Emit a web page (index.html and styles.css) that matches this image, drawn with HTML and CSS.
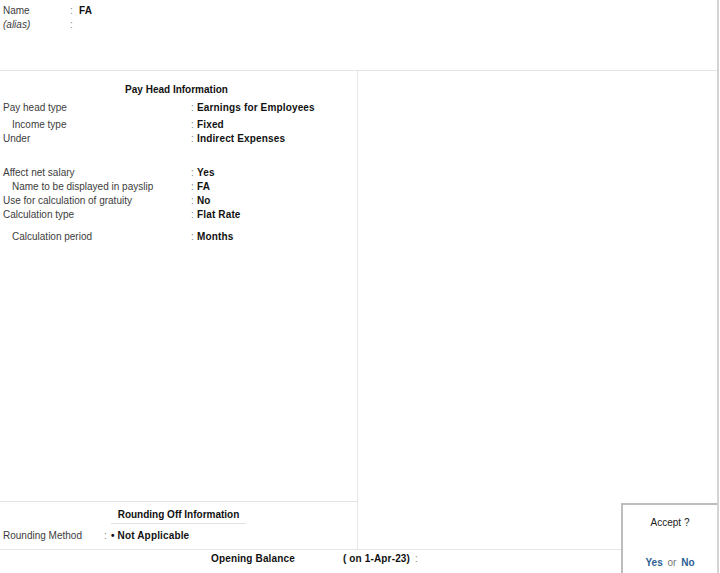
FILE: index.html
```html
<!DOCTYPE html>
<html lang="en">

<head>
    <meta charset="UTF-8">
    <meta name="viewport" content="width=device-width, initial-scale=1.0">
    <title>Pay Head Alteration</title>
    <link rel="stylesheet" href="styles.css">
</head>

<body>
    <div class="page">
        <div class="top">
            <div class="name-row">
                <span class="name-label">Name</span>
                <span class="colon">:</span>
                <span class="value">FA</span>
            </div>
            <div class="name-row">
                <span class="name-label alias">(alias)</span>
                <span class="colon">:</span>
                <span class="value"></span>
            </div>
        </div>

        <div class="main">
            <div class="left">
                <div class="section-title">Pay Head Information</div>

                <div class="row first">
                    <span class="label">Pay head type</span>
                    <span class="colon">:</span>
                    <span class="value">Earnings for Employees</span>
                </div>
                <div class="row gap-small">
                    <span class="label sub">Income type</span>
                    <span class="colon">:</span>
                    <span class="value">Fixed</span>
                </div>
                <div class="row">
                    <span class="label">Under</span>
                    <span class="colon">:</span>
                    <span class="value">Indirect Expenses</span>
                </div>

                <div class="row gap-large">
                    <span class="label">Affect net salary</span>
                    <span class="colon">:</span>
                    <span class="value">Yes</span>
                </div>
                <div class="row">
                    <span class="label sub">Name to be displayed in payslip</span>
                    <span class="colon">:</span>
                    <span class="value">FA</span>
                </div>
                <div class="row">
                    <span class="label">Use for calculation of gratuity</span>
                    <span class="colon">:</span>
                    <span class="value">No</span>
                </div>
                <div class="row">
                    <span class="label">Calculation type</span>
                    <span class="colon">:</span>
                    <span class="value">Flat Rate</span>
                </div>
                <div class="row gap-medium">
                    <span class="label sub">Calculation period</span>
                    <span class="colon">:</span>
                    <span class="value">Months</span>
                </div>

                <div class="rounding">
                    <div class="rounding-title"><span>Rounding Off Information</span></div>
                    <div class="rounding-row">
                        <span class="label">Rounding Method</span>
                        <span class="colon">:</span>
                        <span class="value">&bull; Not Applicable</span>
                    </div>
                </div>
            </div>
            <div class="right"></div>
        </div>

        <div class="footer">
            <span class="value opening">Opening Balance</span>
            <span class="value opening-date">( on 1-Apr-23)</span>
            <span class="colon">:</span>
        </div>

        <!-- confirmation box sits over the bottom right corner -->
        <div class="accept">
            <div class="accept-title">Accept ?</div>
            <div class="accept-options">
                <span class="opt">Yes</span> <span class="or">or</span> <span class="opt">No</span>
            </div>
        </div>
    </div>
</body>

</html>
```

FILE: styles.css
```css
body {
    margin: 0;
    padding: 0;
    background-color: #ffffff;
    font-family: "Liberation Sans", Arial, sans-serif;
    font-size: 10px;
    color: #3c3c3c;
}

.page {
    position: relative;
    width: 717px;
    height: 573px;
    border-right: 2px solid #d4d4d4;
    overflow: hidden;
}

.colon {
    color: #888;
}

.value {
    font-weight: bold;
    color: #111;
    letter-spacing: 0.15px;
}

/* top: name + alias */
.top {
    height: 66px;
    padding-top: 4px;
    border-bottom: 1px solid #e4e4e4;
}

.name-row {
    display: grid;
    grid-template-columns: 67px 9px 1fr;
    line-height: 14px;
    padding-left: 3px;
}

.alias {
    font-style: italic;
}

/* main area */
.main {
    display: flex;
    height: 478px;
}

.left {
    width: 358px;
    display: flex;
    flex-direction: column;
    border-right: 1px solid #e6e6e6;
    padding-top: 12px;
    box-sizing: border-box;
}

.right {
    flex: 1;
}

.section-title {
    text-align: center;
    font-weight: bold;
    color: #111;
    line-height: 14px;
    margin-left: -4px;
}

.row {
    display: grid;
    grid-template-columns: 188px 6px 1fr;
    line-height: 14px;
    padding-left: 3px;
}

.row.first {
    margin-top: 4px;
}

.row.gap-small {
    margin-top: 3px;
}

.row.gap-large {
    margin-top: 20px;
}

.row.gap-medium {
    margin-top: 8px;
}

.label.sub {
    padding-left: 9px;
}

/* rounding off block at the bottom of the left column */
.rounding {
    margin-top: auto;
    border-top: 1px solid #e4e4e4;
    padding-top: 6px;
    height: 48px;
    box-sizing: border-box;
}

.rounding-title {
    text-align: center;
    line-height: 14px;
}

.rounding-title span {
    display: inline-block;
    font-weight: bold;
    color: #111;
    padding: 0 7px 1px 7px;
    border-bottom: 1px solid #e2e2e2;
}

.rounding-row {
    display: grid;
    grid-template-columns: 101px 7px 1fr;
    line-height: 14px;
    padding-left: 3px;
    margin-top: 5px;
}

/* footer */
.footer {
    border-top: 1px solid #e6e6e6;
    display: flex;
    line-height: 14px;
    padding-top: 2px;
    padding-left: 211px;
}

.opening-date {
    margin-left: 48px;
    width: 72px;
}

/* accept dialog */
.accept {
    position: absolute;
    left: 621px;
    top: 503px;
    right: 0;
    bottom: 0;
    background: #fff;
    border: 2px solid #bdbdbd;
    border-bottom: none;
    border-right: none;
    text-align: center;
}

.accept-title {
    margin-top: 11px;
    line-height: 14px;
    color: #222;
}

.accept-options {
    margin-top: 26px;
    line-height: 14px;
}

.opt {
    color: #2d5f93;
    font-weight: bold;
}

.or {
    color: #777;
    padding: 0 2px;
}
```
